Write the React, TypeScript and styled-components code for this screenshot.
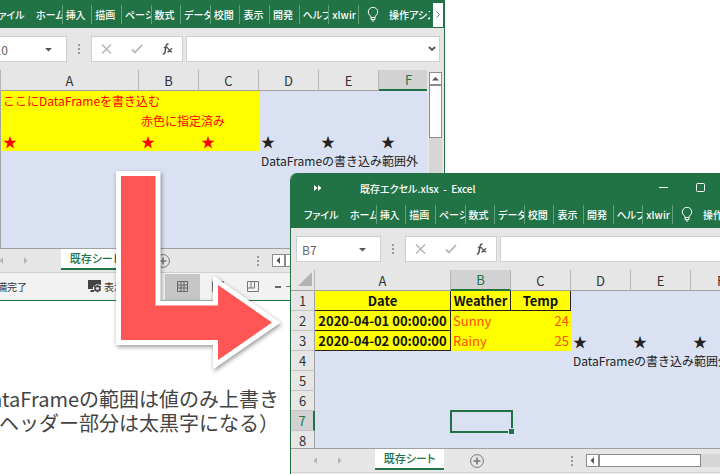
import React from "react";
import styled, { createGlobalStyle, css } from "styled-components";

const GREEN = "#217346";
const CHROME = "#e6e6e6";
const SHEET = "#d9e1f2";

const GlobalStyle = createGlobalStyle`
  * { box-sizing: border-box; }
  body {
    margin: 0;
    background: #fff;
    font-family: "Noto Sans CJK JP", "Noto Sans", sans-serif;
  }
  button, input { font: inherit; color: inherit; }
  button { border: 0; padding: 0; margin: 0; background: none; }
  svg { display: block; flex: none; }
`;

const Desktop = styled.main`
  position: relative;
  height: 100vh;
  overflow: hidden;
`;

const WindowFrame = styled.section<{ $x: number; $y: number; $width: number }>`
  position: absolute;
  left: ${(p) => p.$x}px;
  top: ${(p) => p.$y}px;
  width: ${(p) => p.$width}px;
  display: flex;
  flex-direction: column;
  overflow: hidden;
  border-radius: 7px 7px 0 0;
  background: ${CHROME};
  border: 1px solid ${GREEN};
  border-top: 0;
`;

const TitleBar = styled.header`
  display: flex;
  align-items: center;
  height: 30px;
  padding: 0 16px 0 23px;
  background: ${GREEN};
  color: #fff;
`;

const Title = styled.h1`
  flex: 1;
  margin: 0 0 0 38px;
  font-size: 10px;
  font-weight: 500;
  white-space: pre;
  font-feature-settings: "palt";
`;

const WindowButtons = styled.div`
  display: flex;
  gap: 28px;
`;

const Ribbon = styled.nav`
  display: flex;
  align-items: center;
  height: 25px;
  padding-bottom: 2px;
  background: ${GREEN};
  color: #fff;
  font-size: 10px;
  font-weight: 500;
  font-feature-settings: "palt";
`;

const FileTab = styled.button`
  width: 56px;
  padding-left: 13px;
  text-align: left;
  white-space: nowrap;
`;

const TabStrip = styled.div`
  display: grid;
  grid-template-columns: repeat(11, 1fr);
  width: 326px;
  flex: none;
`;

const RibbonTab = styled.button`
  height: 19px;
  padding: 0 2px 0 3px;
  border-right: 1px solid #62a17e;
  overflow: hidden;
  text-align: left;
  white-space: nowrap;
`;

const Assist = styled.button`
  display: flex;
  align-items: center;
  gap: 10px;
  flex: 1;
  min-width: 0;
  margin: 0 3px 0 8px;
  overflow: hidden;
  text-align: left;
  white-space: nowrap;
`;

const RibbonScroll = styled.button`
  display: grid;
  place-items: center;
  width: 10px;
  height: 24px;
  background: #fff;
  margin-right: 1px;
`;

const FormulaRow = styled.div`
  display: flex;
  align-items: center;
  height: 42px;
  padding: 0 4px 0 5px;
  font-size: 12px;
  color: #666;
`;

const Field = styled.div`
  display: flex;
  align-items: center;
  height: 26px;
  border: 1px solid #cfcfcf;
  background: #fff;
`;

const NameField = styled(Field)`
  width: 85px;
  padding: 0 14px 0 5px;
`;

const FormulaActions = styled(Field)`
  width: 92px;
  justify-content: space-between;
  padding: 0 9px;
  margin-right: 3px;
`;

const FormulaField = styled(Field)`
  flex: 1;
  padding-right: 3px;
`;

const TextInput = styled.input`
  flex: 1;
  min-width: 0;
  width: 100%;
  height: 22px;
  padding: 0;
  border: 0;
  background: transparent;
  outline: 0;
`;

const Divider = styled.div`
  display: grid;
  place-items: center;
  width: 24px;
`;

const Work = styled.div`
  display: flex;
  height: 179px;
  border-bottom: 1px solid #a0a0a0;
`;

const GridView = styled.div`
  flex: 1;
  min-width: 0;
  overflow: hidden;
  background: ${SHEET};
`;

const Sheet = styled.table`
  table-layout: fixed;
  border-collapse: separate;
  border-spacing: 0;
  width: 0;
  color: #222;
  font-size: 12px;
  line-height: 18px;
`;

const Col = styled.col<{ $width: number }>`
  width: ${(p) => p.$width}px;
`;

const ColumnHead = styled.th<{ $active?: boolean }>`
  height: 21px;
  padding: ${(p) => (p.$active ? "1px 0 0" : "2px 0 0")};
  background: ${(p) => (p.$active ? "#d2d2d2" : CHROME)};
  color: ${(p) => (p.$active ? GREEN : "#333")};
  border-right: 1px solid #b5b5b5;
  border-bottom: ${(p) => (p.$active ? `2px solid ${GREEN}` : "1px solid #a0a0a0")};
  font-size: 13px;
  font-weight: 400;
`;

const Corner = styled(ColumnHead)`
  padding: 0 2px 2px 7px;
`;

const RowHead = styled.th<{ $active?: boolean }>`
  height: 20px;
  padding: 1px 0 0;
  background: ${(p) => (p.$active ? "#d2d2d2" : CHROME)};
  color: ${(p) => (p.$active ? GREEN : "#333")};
  border-right: ${(p) => (p.$active ? `2px solid ${GREEN}` : "1px solid #a0a0a0")};
  border-bottom: 1px solid #c4c4c4;
  font-size: 13px;
  font-weight: 400;
`;

type CellKind = "plain" | "fill" | "head" | "index";

const Cell = styled.td<{ $kind: CellKind; $num?: boolean; $selected?: boolean }>`
  position: ${(p) => (p.$selected ? "relative" : "static")};
  height: 20px;
  padding: 0 2px;
  white-space: nowrap;
  text-align: ${(p) => (p.$num ? "right" : "left")};
  ${(p) =>
    p.$kind !== "plain" &&
    css`
      background: #ff0;
      color: #f00;
    `}
  ${(p) =>
    (p.$kind === "head" || p.$kind === "index") &&
    css`
      padding: 1px 0 0;
      color: #111;
      font-size: 13px;
      font-weight: 700;
      text-align: center;
      border-right: 1px solid #222;
      border-bottom: 1px solid #222;
    `}
`;

const Value = styled.span`
  color: #ff4a00;
  font-size: 13px;
`;

const Star = styled.span`
  font-size: 14px;
`;

const Selection = styled.div`
  position: absolute;
  inset: -1px -2px -2px -1px;
  border: 2px solid ${GREEN};
  &::after {
    content: "";
    position: absolute;
    right: -3px;
    bottom: -3px;
    width: 5px;
    height: 5px;
    background: ${GREEN};
    outline: 1px solid ${SHEET};
  }
`;

const VScroll = styled.div`
  display: flex;
  flex-direction: column;
  width: 13px;
  margin: 2px 2px 0 2px;
  background: #d6d6d6;
`;

const ScrollButton = styled.button`
  display: grid;
  place-items: center;
  width: 13px;
  height: 13px;
  flex: none;
  border: 1px solid #8c8c8c;
  background: #fff;
`;

const VThumb = styled.div`
  height: 53px;
  border: 1px solid #8c8c8c;
  background: #fff;
`;

const SheetBar = styled.div`
  display: flex;
  height: 23px;
  font-size: 11px;
`;

const SheetNav = styled.div`
  display: flex;
  align-items: center;
  gap: 17px;
  width: 84px;
  padding-left: 21px;
`;

const SheetTab = styled.button`
  width: 69px;
  height: 21px;
  background: #fff;
  color: ${GREEN};
  border-bottom: 2px solid ${GREEN};
  font-weight: 500;
  line-height: 19px;
  font-feature-settings: "palt";
  white-space: nowrap;
`;

const AddSheet = styled.button`
  display: grid;
  place-items: center;
  margin-left: 25px;
  width: 16px;
`;

const BarSpacer = styled.div`
  display: grid;
  place-items: center;
  width: 4px;
  margin: 0 12px 0 85px;
`;

const HScroll = styled.div`
  display: flex;
  align-items: flex-start;
  flex: 1;
  height: 13px;
  margin: 5px 16px 0 0;
  background: #d6d6d6;
`;

const HThumb = styled.div`
  width: 102px;
  height: 13px;
  border: 1px solid #8c8c8c;
  background: #fff;
`;

const StatusBar = styled.footer`
  display: flex;
  align-items: center;
  height: 28px;
  border-top: 1px solid #d0d0d0;
  background: #f2f2f2;
  color: #333;
  font-size: 10px;
`;

const StatusText = styled.span`
  width: 101px;
  padding-left: 10px;
`;

const DisplaySettings = styled.button`
  display: flex;
  align-items: center;
  gap: 2px;
  width: 87px;
  padding-left: 10px;
`;

const ViewButton = styled.button<{ $active?: boolean }>`
  display: grid;
  place-items: center;
  width: 35px;
  height: 26px;
  background: ${(p) => (p.$active ? "#c6c6c6" : "transparent")};
`;

const ZoomControl = styled.div`
  display: flex;
  align-items: center;
  gap: 5px;
  margin-left: 5px;
`;

const ZoomTrack = styled.div`
  width: 100px;
  height: 1px;
  background: #777;
`;

const ArrowLayer = styled.svg`
  position: absolute;
  left: 106px;
  top: 161px;
  filter: drop-shadow(1px 2px 2px rgba(0, 0, 0, 0.4));
`;

const Caption = styled.p`
  position: absolute;
  left: 0;
  top: 387px;
  width: 279px;
  margin: 0;
  display: flex;
  flex-direction: column;
  align-items: flex-end;
  color: #444;
  font-size: 20px;
  line-height: 24px;
  white-space: nowrap;
`;

const Dots = () => (
  <svg width="2" height="10" fill="#999">
    <rect width="2" height="2" />
    <rect y="4" width="2" height="2" />
    <rect y="8" width="2" height="2" />
  </svg>
);

const Bulb = () => (
  <svg width="12" height="15" viewBox="0 0 12 15" fill="none" stroke="#fff">
    <path d="M4 10.5C4 8.5 1.3 7.8 1.3 5a4.7 4.7 0 0 1 9.4 0c0 2.800-2.700 3.500-2.700 5.500zM4 10.500v2h4v-2M4.800 14h2.400" />
  </svg>
);

const Fx = () => (
  <svg width="11" height="12" viewBox="0 0 11 12" fill="none" stroke="#555">
    <path strokeWidth="1.500" d="M6.500 1.500C5.300.6 4.300 1.500 4 3.300L3 9C2.700 10.700 2 11.300.8 10.700M1.800 4.500h4" />
    <path strokeWidth="1.300" d="M5.500 5.500c1.700-.4 1.800 3.800 4.700 3.300M10.200 5.500c-1.500 0-2.500 3.500-4.700 3.500" />
  </svg>
);

const Triangle = ({ dir, color = "#555" }: { dir: "up" | "down" | "left" | "right"; color?: string }) => {
  const shapes = {
    up: "M0 5.500 3.500 2 7 5.500z",
    down: "M0 2h7L3.500 5.500z",
    left: "M5 0v7L1.500 3.500z",
    right: "M2 0v7l3.500-3.500z",
  };
  return (
    <svg width="7" height="7" fill={color}>
      <path d={shapes[dir]} />
    </svg>
  );
};

const RIBBON = ["ホーム", "挿入", "描画", "ページ", "数式", "データ", "校閲", "表示", "開発", "ヘルプ", "xlwir"];
const COLUMNS = ["A", "B", "C", "D", "E", "F", "G"];
const ROWS = [1, 2, 3, 4, 5, 6, 7, 8];

type CellData = { text?: string; kind?: CellKind; num?: boolean; value?: boolean; star?: boolean };

type ExcelProps = {
  x: number;
  y: number;
  width: number;
  firstColumn: number;
  nameBox: string;
  activeColumn: string;
  activeRow: number;
  cells: Record<string, CellData>;
};

function CellContent({ cell }: { cell: CellData }) {
  if (cell.star) return <Star>★</Star>;
  if (cell.value) return <Value>{cell.text}</Value>;
  return <>{cell.text}</>;
}

function ExcelWindow({ x, y, width, firstColumn, nameBox, activeColumn, activeRow, cells }: ExcelProps) {
  return (
    <WindowFrame $x={x} $y={y} $width={width}>
      <TitleBar>
        <svg width="8" height="6" fill="#fff">
          <path d="M0 0l3.500 3L0 6zM4 0l3.500 3L4 6z" />
        </svg>
        <Title>既存エクセル.xlsx  -  Excel</Title>
        <WindowButtons>
          <button aria-label="最小化">
            <svg width="9" height="10" stroke="#fff"><path d="M0 4.500h9" /></svg>
          </button>
          <button aria-label="最大化">
            <svg width="10" height="10" fill="none" stroke="#fff"><rect x=".5" y=".5" width="8" height="8" rx="1" /></svg>
          </button>
          <button aria-label="閉じる">
            <svg width="9" height="9" stroke="#fff"><path d="M0 0l9 9M9 0L0 9" /></svg>
          </button>
        </WindowButtons>
      </TitleBar>
      <Ribbon>
        <FileTab>ファイル</FileTab>
        <TabStrip>
          {RIBBON.map((tab) => (
            <RibbonTab key={tab}>{tab}</RibbonTab>
          ))}
        </TabStrip>
        <Assist>
          <Bulb />
          操作アシスト
        </Assist>
        <RibbonScroll aria-label="次のタブ">
          <svg width="4" height="7" fill="none" stroke="#777"><path d="M.5.500l3 3-3 3" /></svg>
        </RibbonScroll>
      </Ribbon>
      <FormulaRow>
        <NameField>
          <TextInput aria-label="名前ボックス" defaultValue={nameBox} />
          <button aria-label="名前の一覧"><Triangle dir="down" /></button>
        </NameField>
        <Divider><Dots /></Divider>
        <FormulaActions>
          <button aria-label="キャンセル">
            <svg width="11" height="10" stroke="#b5b5b5" strokeWidth="1.500"><path d="M1 .5l9 9M10 .5l-9 9" /></svg>
          </button>
          <button aria-label="入力">
            <svg width="12" height="10" fill="none" stroke="#b5b5b5" strokeWidth="1.800"><path d="M1 5.500l3 3L11 1" /></svg>
          </button>
          <button aria-label="関数の挿入"><Fx /></button>
        </FormulaActions>
        <FormulaField>
          <TextInput aria-label="数式バー" />
          <button aria-label="数式バーの展開">
            <svg width="8" height="6" fill="none" stroke="#555" strokeWidth="1.800"><path d="M1 1l3 3 3-3" /></svg>
          </button>
        </FormulaField>
      </FormulaRow>
      <Work>
        <GridView>
          <Sheet>
            <colgroup>
              <Col $width={24} />
              {COLUMNS.map((c) => (
                <Col key={c} $width={c === "A" ? firstColumn : 60} />
              ))}
            </colgroup>
            <thead>
              <tr>
                <Corner>
                  <svg width="14" height="14" fill="#b3b3b3"><path d="M14 0v14H0z" /></svg>
                </Corner>
                {COLUMNS.map((c) => (
                  <ColumnHead key={c} scope="col" $active={c === activeColumn}>{c}</ColumnHead>
                ))}
              </tr>
            </thead>
            <tbody>
              {ROWS.map((r) => (
                <tr key={r}>
                  <RowHead scope="row" $active={r === activeRow}>{r}</RowHead>
                  {COLUMNS.map((c) => {
                    const cell = cells[c + r] ?? {};
                    const selected = c === activeColumn && r === activeRow;
                    return (
                      <Cell key={c} $kind={cell.kind ?? "plain"} $num={cell.num} $selected={selected}>
                        <CellContent cell={cell} />
                        {selected && <Selection />}
                      </Cell>
                    );
                  })}
                </tr>
              ))}
            </tbody>
          </Sheet>
        </GridView>
        <VScroll>
          <ScrollButton aria-label="上へ"><Triangle dir="up" /></ScrollButton>
          <VThumb />
        </VScroll>
      </Work>
      <SheetBar>
        <SheetNav>
          <Triangle dir="left" color="#b5b5b5" />
          <Triangle dir="right" color="#b5b5b5" />
        </SheetNav>
        <SheetTab>既存シート</SheetTab>
        <AddSheet aria-label="新しいシート">
          <svg width="14" height="14" fill="none" stroke="#777">
            <circle cx="7" cy="7" r="6.400" />
            <path strokeWidth="1.600" d="M3.500 7h7M7 3.500v7" />
          </svg>
        </AddSheet>
        <BarSpacer><Dots /></BarSpacer>
        <HScroll>
          <ScrollButton aria-label="左へ"><Triangle dir="left" /></ScrollButton>
          <HThumb />
        </HScroll>
      </SheetBar>
      <StatusBar>
        <StatusText>準備完了</StatusText>
        <DisplaySettings>
          <svg width="14" height="13" viewBox="0 0 14 13">
            <path fill="#444" d="M0 0h13v5L9 4 5 7v2H0zM3 10h3v2H2z" />
            <circle cx="9.500" cy="8.500" r="2.500" fill="none" stroke="#444" strokeWidth="1.500" />
            <path stroke="#444" d="M9.500 4.500v8M6 6.500l7 4M13 6.500l-7 4" />
            <circle cx="9.500" cy="8.500" r="1.300" fill="#f2f2f2" />
          </svg>
          表示
        </DisplaySettings>
        <ViewButton aria-label="標準" $active>
          <svg width="11" height="11" fill="none" stroke="#666"><path d="M.5.500h10v10H.5zM.5 4h10M.5 7h10M4 .5v10M7 .5v10" /></svg>
        </ViewButton>
        <ViewButton aria-label="ページ レイアウト">
          <svg width="12" height="11" fill="none" stroke="#777"><path d="M.5.500h11v10H.5zM3 3h6v7.500M3 3v7.500" /></svg>
        </ViewButton>
        <ViewButton aria-label="改ページ プレビュー">
          <svg width="12" height="11" fill="none" stroke="#777"><path d="M.5.500h11v10H.5zM.5 7h7V.5M4 .5V7" /></svg>
        </ViewButton>
        <ZoomControl>
          <button aria-label="縮小">
            <svg width="6" height="2" fill="#666"><rect width="6" height="2" /></svg>
          </button>
          <ZoomTrack />
        </ZoomControl>
      </StatusBar>
    </WindowFrame>
  );
}

const star = (kind: CellKind = "plain"): CellData => ({ star: true, kind });

const beforeCells: Record<string, CellData> = {
  A1: { text: "ここにDataFrameを書き込む", kind: "fill" },
  B1: { kind: "fill" },
  C1: { kind: "fill" },
  A2: { kind: "fill" },
  B2: { text: "赤色に指定済み", kind: "fill" },
  C2: { kind: "fill" },
  A3: star("fill"),
  B3: star("fill"),
  C3: star("fill"),
  D3: star(),
  E3: star(),
  F3: star(),
  D4: { text: "DataFrameの書き込み範囲外" },
};

const afterCells: Record<string, CellData> = {
  A1: { text: "Date", kind: "head" },
  B1: { text: "Weather", kind: "head" },
  C1: { text: "Temp", kind: "head" },
  A2: { text: "2020-04-01 00:00:00", kind: "index" },
  B2: { text: "Sunny", kind: "fill", value: true },
  C2: { text: "24", kind: "fill", num: true, value: true },
  A3: { text: "2020-04-02 00:00:00", kind: "index" },
  B3: { text: "Rainy", kind: "fill", value: true },
  C3: { text: "25", kind: "fill", num: true, value: true },
  D3: star(),
  E3: star(),
  F3: star(),
  D4: { text: "DataFrameの書き込み範囲外" },
};

export default function App() {
  return (
    <Desktop>
      <GlobalStyle />
      <ExcelWindow
        x={-24}
        y={-27}
        width={469}
        firstColumn={138}
        nameBox="F10"
        activeColumn="F"
        activeRow={10}
        cells={beforeCells}
      />
      <Caption>
        <span>DataFrameの範囲は値のみ上書き</span>
        <span>（ヘッダー部分は太黒字になる）</span>
      </Caption>
      <ExcelWindow
        x={290}
        y={173}
        width={470}
        firstColumn={136}
        nameBox="B7"
        activeColumn="B"
        activeRow={7}
        cells={afterCells}
      />
      <ArrowLayer width="184" height="220" viewBox="106 161 184 220">
        <path
          d="M121 176H155.500V305.500H218V285L272 322.500L218 360V340H121Z"
          fill="#ff5555"
          stroke="#fff"
          strokeWidth="10"
          strokeMiterlimit="10"
          paintOrder="stroke"
        />
      </ArrowLayer>
    </Desktop>
  );
}
